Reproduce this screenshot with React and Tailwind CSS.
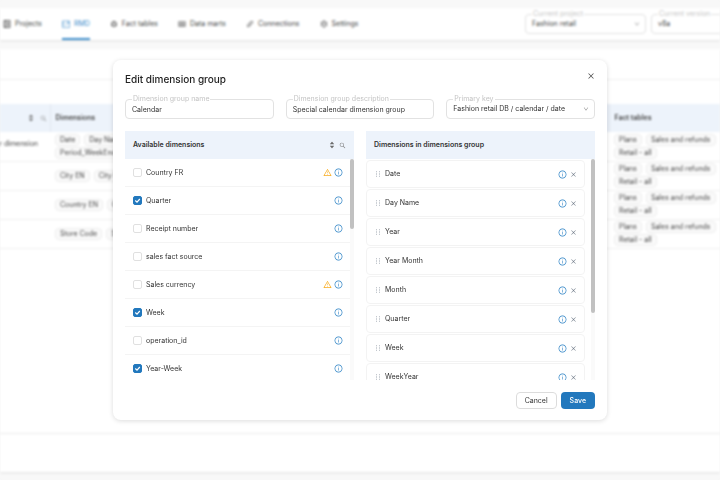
import React, { useState } from "react";
import {
  AiFillCaretDown,
  AiFillCaretUp,
  AiOutlineApi,
  AiOutlineClose,
  AiOutlineCodeSandbox,
  AiOutlineDown,
  AiOutlineHolder,
  AiOutlineInfoCircle,
  AiOutlineSearch,
  AiOutlineSetting,
  AiOutlineTable,
  AiOutlineWarning,
} from "react-icons/ai";

const ProjectsIcon = ({ size }) => (
  <svg width={size} height={size} viewBox="0 0 8 8" fill="none" stroke="currentColor" strokeWidth="0.8">
    <path d="M1 .5h6v7H1zM2.8.5v7M4 2.5h2M4 4h2M4 5.5h2" />
  </svg>
);

const ModelIcon = ({ size }) => (
  <svg width={size} height={size} viewBox="0 0 8 8" fill="none" stroke="currentColor" strokeWidth="0.6">
    <path d="M.5 1h7v6.5h-7zM.5 3h2M.5 5h2M3.5 5.5 6 3M6 1v2h1.5" />
  </svg>
);

const NAV = [
  { label: "Projects", icon: ProjectsIcon },
  { label: "RMD", icon: ModelIcon, active: true },
  { label: "Fact tables", icon: AiOutlineCodeSandbox },
  { label: "Data marts", icon: AiOutlineTable },
  { label: "Connections", icon: AiOutlineApi },
  { label: "Settings", icon: AiOutlineSetting },
];

const GROUPS = [
  { name: "r dimension", tags: ["Date", "Day Name", "Period_WeekEnd"] },
  { name: "", tags: ["City EN", "City FR"] },
  { name: "", tags: ["Country EN", "Country FR"] },
  { name: "", tags: ["Store Code", "Store Name"] },
];

const FACT_TABLES = ["Plans", "Sales and refunds", "Retail - all"];

const AVAILABLE = [
  { name: "Country FR", warning: true },
  { name: "Quarter", checked: true },
  { name: "Receipt number" },
  { name: "sales fact source" },
  { name: "Sales currency", warning: true },
  { name: "Week", checked: true },
  { name: "operation_id" },
  { name: "Year-Week", checked: true },
];

const SELECTED = ["Date", "Day Name", "Year", "Year Month", "Month", "Quarter", "Week", "WeekYear"];

const SortIcon = () => (
  <span className="flex flex-col items-center text-[#6b6b6b]">
    <AiFillCaretUp size={6} className="-mb-px" />
    <AiFillCaretDown size={6} className="-mt-px" />
  </span>
);

const Tag = ({ children }) => (
  <span className="h-3 px-1 flex items-center rounded-sm border border-[#ececec] bg-[#fafafa] whitespace-nowrap">
    {children}
  </span>
);

const Field = ({ id, label, children }) => (
  <div className="relative min-w-0">
    {children}
    <label
      htmlFor={id}
      className="absolute left-[7px] -top-1 px-px bg-white text-[7px] leading-[8px] text-[#c4c4c4] whitespace-nowrap"
    >
      {label}
    </label>
  </div>
);

const controlClass =
  "block w-full h-5 px-[6px] rounded border border-[#e2e2e2] bg-white appearance-none text-inherit outline-none";

const SelectField = ({ id, label, value }) => (
  <Field id={id} label={label}>
    <select id={id} className={controlClass} defaultValue={value}>
      <option>{value}</option>
    </select>
    <AiOutlineDown size={6} className="absolute right-[6px] top-[7px] text-[#888] pointer-events-none" />
  </Field>
);

const InfoButton = ({ name }) => (
  <button aria-label={`About ${name}`} className="text-[#2a80c4]">
    <AiOutlineInfoCircle size={9} />
  </button>
);

const PageBackground = () => (
  <div className="min-h-screen flex flex-col pt-2 pb-2 bg-[#f8f8f8] text-[#444] blur-[1px]">
    <header className="h-8 shrink-0 pl-[3px] flex items-center justify-between bg-white shadow-[0_1px_2px_#0000001a] overflow-hidden">
      <nav className="h-full flex gap-5">
        {NAV.map(({ label, icon: Icon, active }) => (
          <a
            key={label}
            href="#"
            className={
              active
                ? "flex items-center gap-1 whitespace-nowrap text-[#3b8ccb] border-y-2 border-t-transparent border-b-[#3b8ccb]"
                : "flex items-center gap-1 whitespace-nowrap"
            }
          >
            <Icon size={8} />
            {label}
          </a>
        ))}
      </nav>
      <div className="flex gap-[5px] shrink-0">
        <div className="w-[121px]">
          <SelectField id="project" label="Current project" value="Fashion retail" />
        </div>
        <div className="w-[121px] -mr-[52px]">
          <SelectField id="version" label="Current version" value="v8a" />
        </div>
      </div>
    </header>

    <main className="grow mt-[9px] flex flex-col bg-white shadow-[0_1px_2px_#0000001a]">
      <div className="h-[31px] border-b border-[#f0f0f0]" />
      <table className="w-full mt-6 table-fixed border-collapse">
        <colgroup>
          <col className="w-[50px]" />
          <col />
          <col className="w-[111px]" />
        </colgroup>
        <thead>
          <tr className="h-7 bg-[#edf3fb] text-left">
            <th className="border-r border-[#e2e8f0]">
              <div className="flex items-center justify-end gap-[6px] pr-[3px]">
                <SortIcon />
                <AiOutlineSearch size={7} className="text-[#888]" />
              </div>
            </th>
            <th className="pl-[5px] font-semibold border-r border-[#e2e8f0]">Dimensions</th>
            <th className="pl-[5px] font-semibold">Fact tables</th>
          </tr>
        </thead>
        <tbody>
          {GROUPS.map(({ name, tags }) => (
            <tr key={tags[0]} className="h-[29px] border-b border-[#f0f0f0]">
              <td>
                <div className="flex justify-end pr-3 pb-1 whitespace-nowrap">{name}</div>
              </td>
              <td className="pl-[5px]">
                <div className="max-w-[104px] flex flex-wrap gap-x-1 gap-y-px">
                  {tags.map((tag) => (
                    <Tag key={tag}>{tag}</Tag>
                  ))}
                </div>
              </td>
              <td className="pl-[5px]">
                <div className="flex flex-wrap gap-x-1 gap-y-px">
                  {FACT_TABLES.map((tag) => (
                    <Tag key={tag}>{tag}</Tag>
                  ))}
                </div>
              </td>
            </tr>
          ))}
        </tbody>
      </table>
      <footer className="mt-auto h-[39px] border-t border-[#ebebeb]" />
    </main>
  </div>
);

const AvailableRow = ({ name, warning, checked }) => {
  const [on, setOn] = useState(Boolean(checked));

  return (
    <li className="h-7 shrink-0 flex items-center gap-[2px] pl-2 pr-[7px] border-b border-[#f4f4f4]">
      <label className="grow flex items-center gap-1">
        <span className="relative flex">
          <input
            type="checkbox"
            checked={on}
            onChange={() => setOn(!on)}
            className="size-[9px] appearance-none rounded-xs border border-[#e0e0e0] bg-white checked:bg-[#2278bd] checked:border-[#2278bd]"
          />
          {on && (
            <svg viewBox="0 0 9 9" className="absolute inset-0 pointer-events-none" fill="none" stroke="white" strokeWidth="1.2">
              <path d="M2.3 4.5 4 6.1 6.8 3" />
            </svg>
          )}
        </span>
        {name}
      </label>
      {warning && <AiOutlineWarning size={9} className="text-[#f8ab1c]" />}
      <InfoButton name={name} />
    </li>
  );
};

const SelectedCard = ({ name }) => (
  <li className="h-7 shrink-0 flex items-center px-[7px] rounded border border-[#f3f3f3] bg-white">
    <AiOutlineHolder size={8} className="mr-[3px] text-[#76818e]" />
    <span className="grow">{name}</span>
    <InfoButton name={name} />
    <button aria-label={`Remove ${name}`} className="ml-[3px] text-[#76818e]">
      <AiOutlineClose size={7} />
    </button>
  </li>
);

const EditGroupModal = () => (
  <div className="fixed inset-0 flex items-center justify-center">
    <div
      role="dialog"
      aria-labelledby="modal-title"
      className="w-full max-w-[494px] px-3 pt-3 pb-[11px] rounded-lg bg-white shadow-[0_1px_5px_#00000024]"
    >
      <div className="h-[15px] flex items-start justify-between">
        <h1 id="modal-title" className="text-[10px] leading-[14px] font-medium text-[#222]">
          Edit dimension group
        </h1>
        <button aria-label="Close" className="text-[#444]">
          <AiOutlineClose size={8} />
        </button>
      </div>

      <div className="grid grid-cols-3 gap-3 mt-3">
        <Field id="name" label="Dimension group name">
          <input id="name" className={controlClass} defaultValue="Calendar" />
        </Field>
        <Field id="description" label="Dimension group description">
          <input id="description" className={controlClass} defaultValue="Special calendar dimension group" />
        </Field>
        <SelectField id="key" label="Primary key" value="Fashion retail DB / calendar / date" />
      </div>

      <div className="grid grid-cols-2 gap-3 mt-3">
        <section>
          <header className="h-7 px-2 flex items-center gap-1 bg-[#edf3fb]">
            <h2 className="grow font-semibold">Available dimensions</h2>
            <SortIcon />
            <AiOutlineSearch size={7} className="text-[#777]" />
          </header>
          <div className="h-[221px] flex">
            <ul className="grow flex flex-col overflow-hidden">
              {AVAILABLE.map((item) => (
                <AvailableRow key={item.name} {...item} />
              ))}
            </ul>
            <div className="w-1 bg-[#fafafa]">
              <div className="h-[70px] rounded-full bg-[#c1c1c1]" />
            </div>
          </div>
        </section>

        <section>
          <header className="h-7 px-2 flex items-center bg-[#edf3fb]">
            <h2 className="font-semibold">Dimensions in dimensions group</h2>
          </header>
          <div className="h-[221px] flex gap-[6px]">
            <ul className="grow pt-px flex flex-col gap-px overflow-hidden">
              {SELECTED.map((name) => (
                <SelectedCard key={name} name={name} />
              ))}
            </ul>
            <div className="w-1 bg-[#fafafa]">
              <div className="h-[154px] rounded-full bg-[#c1c1c1]" />
            </div>
          </div>
        </section>
      </div>

      <div className="mt-3 flex justify-end gap-1">
        <button className="h-[17px] px-2 rounded-sm border border-[#dcdcdc]">Cancel</button>
        <button className="h-[17px] px-[9px] rounded-sm bg-[#2278bd] text-white font-medium">Save</button>
      </div>
    </div>
  </div>
);

export default function App() {
  return (
    <div className="min-h-screen overflow-hidden bg-[#f8f8f8] font-['Inter',sans-serif] text-[7px] leading-[10px] text-[#333]">
      <PageBackground />
      <EditGroupModal />
    </div>
  );
}
